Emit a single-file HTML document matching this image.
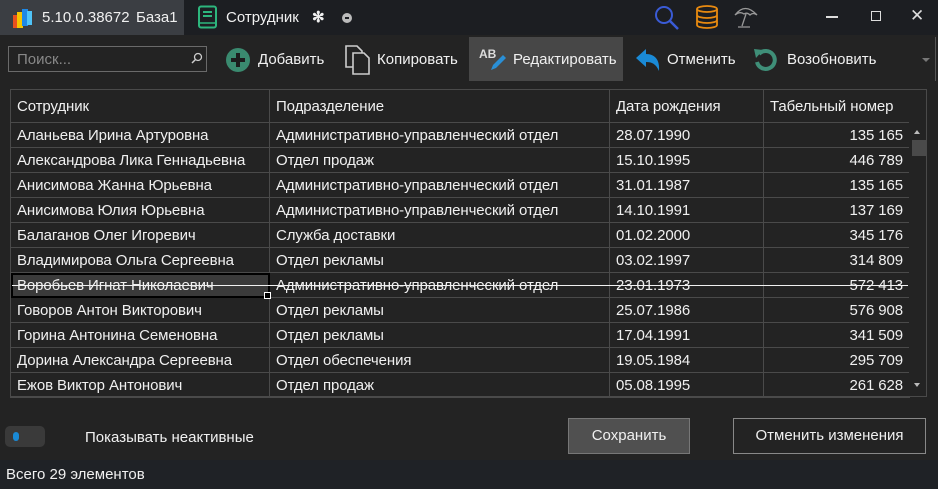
<!DOCTYPE html>
<html><head><meta charset="utf-8"><style>
*{box-sizing:border-box;margin:0;padding:0}
body{width:938px;height:489px;background:#232323;font-family:"Liberation Sans",sans-serif;font-size:14px;color:#f0f0f0;position:relative;overflow:hidden}
.a{position:absolute;white-space:nowrap}
table{border-collapse:collapse;position:absolute;left:10px;top:89px;table-layout:fixed}
td{border:1px solid #4a4a4a;height:25px;padding:0 6px;white-space:nowrap;overflow:hidden;font-size:15px;letter-spacing:-0.1px}
tr.h td{height:33px}
td.n{text-align:right}
</style></head><body>
<div class="a" style="left:0;top:0;width:938px;height:35px;background:#1c1e22"></div>
<div class="a" style="left:0;top:0;width:184px;height:35px;background:#3b3e43"></div>
<svg class="a" style="left:12px;top:6px" width="22" height="24" viewBox="0 0 22 24"><rect x="1" y="9" width="6" height="13" fill="#e8501e"/><rect x="5" y="6" width="6" height="16" fill="#f5c400"/><rect x="10" y="3" width="6" height="17" fill="#1e88e5"/><rect x="15" y="5" width="5" height="14" fill="#4fc3f7"/></svg>
<div class="a" style="left:42px;top:9px;font-size:15px">5.10.0.38672</div>
<div class="a" style="left:136px;top:9px;font-size:15px">База1</div>
<svg class="a" style="left:197px;top:5px" width="22" height="25" viewBox="0 0 22 25"><rect x="2" y="1.5" width="17" height="21" rx="2" fill="none" stroke="#2db67d" stroke-width="2"/><line x1="6" y1="7" x2="15" y2="7" stroke="#2db67d" stroke-width="2"/><line x1="6" y1="11" x2="15" y2="11" stroke="#2db67d" stroke-width="2"/><line x1="2" y1="18" x2="19" y2="18" stroke="#2db67d" stroke-width="1.5"/></svg>
<div class="a" style="left:226px;top:9px;font-size:15px">Сотрудник</div>
<div class="a" style="left:312px;top:8px;font-size:15px;font-weight:bold">✻</div>
<div class="a" style="left:342px;top:13px;width:10px;height:10px;border-radius:5px;background:#bbb"></div>
<div class="a" style="left:345px;top:17px;width:4px;height:2px;background:#1c1e22"></div>
<svg class="a" style="left:654px;top:5px" width="26" height="26"><circle cx="10" cy="10" r="8" fill="none" stroke="#3a5bd6" stroke-width="2"/><line x1="16" y1="16" x2="24" y2="24" stroke="#3a5bd6" stroke-width="2.5"/></svg>
<svg class="a" style="left:695px;top:4px" width="24" height="26"><g fill="none" stroke="#e88a10" stroke-width="1.8"><ellipse cx="12" cy="5" rx="10" ry="3"/><path d="M2 5v16c0 1.7 4.5 3 10 3s10-1.3 10-3V5M2 11c0 1.7 4.5 3 10 3s10-1.3 10-3M2 16c0 1.7 4.5 3 10 3s10-1.3 10-3"/></g></svg>
<svg class="a" style="left:733px;top:4px" width="26" height="26"><g fill="none" stroke="#999" stroke-width="1.3"><path d="M2 11 Q12 -2 24 11 Q20 8 17 11 Q14 8 11 10 Q7 7 2 11z"/><path d="M13 10 L9 22 M5 23 h12"/></g></svg>
<div class="a" style="left:826px;top:16px;width:12px;height:2px;background:#ddd"></div>
<div class="a" style="left:871px;top:11px;width:10px;height:10px;border:1.5px solid #ddd"></div>
<div class="a" style="left:910px;top:6px;font-size:17px;color:#ddd">✕</div>
<div class="a" style="left:8px;top:46px;width:199px;height:26px;border:1px solid #6a6a6a"></div>
<div class="a" style="left:17px;top:51px;color:#888;font-size:15px">Поиск...</div>
<svg class="a" style="left:191px;top:52px" width="12" height="12"><circle cx="7" cy="5" r="3.5" fill="none" stroke="#ccc" stroke-width="1.3"/><line x1="4.5" y1="7.5" x2="1" y2="11" stroke="#ccc" stroke-width="1.5"/></svg>
<svg class="a" style="left:226px;top:48px" width="24" height="24"><circle cx="12" cy="12" r="12" fill="#3a8a6f"/><rect x="10" y="5" width="4" height="14" fill="#1c1c1c"/><rect x="5" y="10" width="14" height="4" fill="#1c1c1c"/></svg>
<div class="a" style="left:258px;top:51px;font-size:15px">Добавить</div>
<svg class="a" style="left:345px;top:45px" width="26" height="30"><g fill="#232323" stroke="#ccc" stroke-width="1.6"><path d="M1 1h11l5 5v16H1z"/><path d="M8 8h11l5 5v16H8z"/></g></svg>
<div class="a" style="left:377px;top:51px;font-size:15px">Копировать</div>
<div class="a" style="left:469px;top:37px;width:154px;height:44px;background:#474747"></div>
<div class="a" style="left:479px;top:47px;font-size:12px;font-weight:bold;color:#ddd">AB</div>
<svg class="a" style="left:488px;top:52px" width="20" height="20"><path d="M3 18 L5 13 L15 3 L18 6 L8 16z" fill="#2a8fd6"/></svg>
<div class="a" style="left:513px;top:51px;font-size:15px">Редактировать</div>
<svg class="a" style="left:635px;top:48px" width="26" height="24"><path d="M1 10 L11 1 V6 C20 6 25 12 24 23 C21 16 17 14 11 14 V19z" fill="#1a8ad6"/></svg>
<div class="a" style="left:667px;top:51px;font-size:15px">Отменить</div>
<svg class="a" style="left:753px;top:47px" width="26" height="26"><path d="M6 7 A9 9 0 1 1 4 15" fill="none" stroke="#3f8f78" stroke-width="4"/><path d="M1 2 L10 3 L3 11z" fill="#3f8f78"/></svg>
<div class="a" style="left:787px;top:51px;font-size:15px">Возобновить</div>
<div class="a" style="left:922px;top:58px;width:0;height:0;border-left:4px solid transparent;border-right:4px solid transparent;border-top:4px solid #777"></div>
<div class="a" style="left:935px;top:37px;width:1px;height:44px;background:#555"></div>
<table>
<colgroup><col style="width:259px"><col style="width:340px"><col style="width:154px"><col style="width:146px"></colgroup>
<tr class="h"><td>Сотрудник</td><td>Подразделение</td><td>Дата рождения</td><td>Табельный номер</td></tr>
<tr><td>Аланьева Ирина Артуровна</td><td>Административно-управленческий отдел</td><td>28.07.1990</td><td class="n">135 165</td></tr>
<tr><td>Александрова Лика Геннадьевна</td><td>Отдел продаж</td><td>15.10.1995</td><td class="n">446 789</td></tr>
<tr><td>Анисимова Жанна Юрьевна</td><td>Административно-управленческий отдел</td><td>31.01.1987</td><td class="n">135 165</td></tr>
<tr><td>Анисимова Юлия Юрьевна</td><td>Административно-управленческий отдел</td><td>14.10.1991</td><td class="n">137 169</td></tr>
<tr><td>Балаганов Олег Игоревич</td><td>Служба доставки</td><td>01.02.2000</td><td class="n">345 176</td></tr>
<tr><td>Владимирова Ольга Сергеевна</td><td>Отдел рекламы</td><td>03.02.1997</td><td class="n">314 809</td></tr>
<tr><td style="background:#3a3a3a;outline:2px solid #000;outline-offset:-2px">Воробьев Игнат Николаевич</td><td>Административно-управленческий отдел</td><td>23.01.1973</td><td class="n">572 413</td></tr>
<tr><td>Говоров Антон Викторович</td><td>Отдел рекламы</td><td>25.07.1986</td><td class="n">576 908</td></tr>
<tr><td>Горина Антонина Семеновна</td><td>Отдел рекламы</td><td>17.04.1991</td><td class="n">341 509</td></tr>
<tr><td>Дорина Александра Сергеевна</td><td>Отдел обеспечения</td><td>19.05.1984</td><td class="n">295 709</td></tr>
<tr><td>Ежов Виктор Антонович</td><td>Отдел продаж</td><td>05.08.1995</td><td class="n">261 628</td></tr>
</table>
<div class="a" style="left:12px;top:285px;width:896px;height:1px;background:#f0f0f0"></div>
<div class="a" style="left:10px;top:396px;width:900px;height:1px;background:#4a4a4a"></div>
<div class="a" style="left:909px;top:89px;width:18px;height:308px;border:1px solid #4a4a4a;border-left:none;background:#232323"></div>
<div class="a" style="left:912px;top:140px;width:15px;height:16px;background:#4a4a4a"></div>
<div class="a" style="left:914px;top:130px;border-left:3px solid transparent;border-right:3px solid transparent;border-bottom:4px solid #bbb"></div>
<div class="a" style="left:914px;top:383px;border-left:3px solid transparent;border-right:3px solid transparent;border-top:4px solid #bbb"></div>
<div class="a" style="left:264px;top:292px;width:7px;height:7px;background:#000;border:1px solid #fff"></div>
<div class="a" style="left:5px;top:426px;width:40px;height:21px;border-radius:5px;background:#3a3a3a"></div>
<div class="a" style="left:13px;top:432px;width:6px;height:9px;border-radius:3px;background:#1a8ad6"></div>
<div class="a" style="left:85px;top:429px;font-size:15px">Показывать неактивные</div>
<div class="a" style="left:568px;top:418px;width:122px;height:36px;background:#505050;border:1px solid #777;text-align:center;line-height:34px;font-size:15px">Сохранить</div>
<div class="a" style="left:733px;top:418px;width:193px;height:36px;border:1px solid #888;text-align:center;line-height:34px;font-size:15px">Отменить изменения</div>
<div class="a" style="left:0;top:460px;width:938px;height:29px;background:#1f2226"></div>
<div class="a" style="left:6px;top:466px;font-size:15px">Всего 29 элементов</div>
</body></html>
